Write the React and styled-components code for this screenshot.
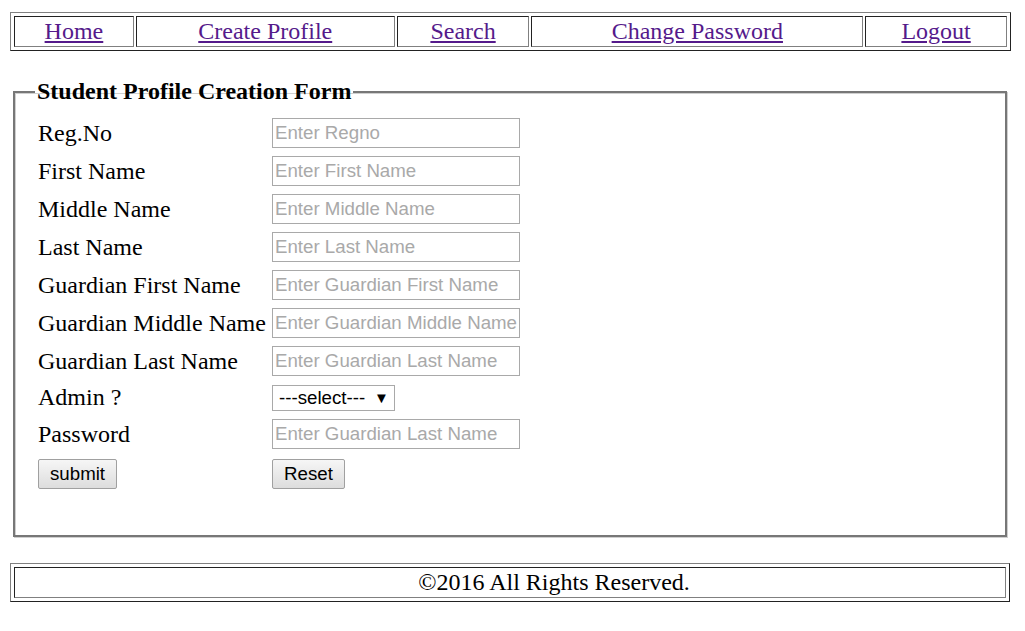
import React from 'react';
import styled, { createGlobalStyle } from 'styled-components';

const GlobalStyle = createGlobalStyle`
  body {
    margin: 0;
    background: #fff;
    color: #000;
    font-family: 'Liberation Serif', 'Times New Roman', serif;
  }
`;

const Page = styled.div`
  padding: 12px 0 0 10px;
  width: 1001px;
`;

const Bar = styled.div`
  display: grid;
  grid-template-columns: ${(p) => p.cols || '1fr'};
  gap: 2px;
  padding: 3px;
  border: 1px solid;
  border-color: #808080 #222 #222 #808080;
  box-sizing: border-box;
  width: ${(p) => p.width || '1001px'};
`;

const Cell = styled.div`
  height: 31px;
  box-sizing: border-box;
  border: 1px solid;
  border-color: #222 #808080 #808080 #222;
  display: flex;
  align-items: center;
  justify-content: center;
  font-size: 24px;
  padding-left: ${(p) => p.shift || 0}px;
`;

const NavLink = styled.a`
  color: #551a8b;
  text-decoration: underline;
  cursor: pointer;
`;

const Fieldset = styled.fieldset`
  margin: 27px 0 0 3px;
  width: 994px;
  box-sizing: border-box;
  border: 2px solid #777;
  box-shadow: inset 1px 1px 0 #cfcfcf, 1px 1px 0 #cfcfcf;
  padding: 13px 23px 44px;
`;

const Legend = styled.legend`
  font-size: 24px;
  font-weight: bold;
  padding: 0 2px;
  margin-left: -3px;
`;

const FormGrid = styled.div`
  display: grid;
  grid-template-columns: 234px auto;
  grid-template-rows: repeat(7, 30px) 27px 30px 34px;
  row-gap: 8px;
  align-items: center;
  justify-items: start;
`;

const Label = styled.label`
  font-size: 24px;
  white-space: nowrap;
`;

const TextInput = styled.input`
  width: 248px;
  height: 30px;
  box-sizing: border-box;
  border: 1px solid #a9a9a9;
  padding: 0 2px;
  font-family: Arial, 'Liberation Sans', sans-serif;
  font-size: 18.7px;
  color: #000;
  &::placeholder {
    color: #a9a9a9;
  }
  &:focus {
    outline: none;
  }
`;

const SelectBox = styled.span`
  display: inline-flex;
  align-items: center;
  height: 26px;
  width: 123px;
  box-sizing: border-box;
  border: 1px solid #a9a9a9;
  background: #fff;
  font-family: Arial, 'Liberation Sans', sans-serif;
  font-size: 18.7px;
`;

const Select = styled.select`
  appearance: none;
  border: none;
  background: transparent;
  font: inherit;
  color: #000;
  padding: 0 0 0 6px;
  width: 101px;
  &:focus {
    outline: none;
  }
`;

const Arrow = styled.span`
  font-size: 15px;
  pointer-events: none;
`;

const Button = styled.button`
  height: 30px;
  padding: 0 11px;
  box-sizing: border-box;
  border: 1px solid #a0a0a0;
  border-radius: 2px;
  background: linear-gradient(#f6f6f6, #dddddd);
  font-family: Arial, 'Liberation Sans', sans-serif;
  font-size: 18.7px;
  color: #000;
`;

const Footer = styled.div`
  margin-top: 26px;
`;

const navItems = [
  ['Home', '120fr'],
  ['Create Profile', '259fr'],
  ['Search', '133fr'],
  ['Change Password', '332fr'],
  ['Logout', '142fr'],
];

const fields = [
  ['Reg.No', 'Enter Regno'],
  ['First Name', 'Enter First Name'],
  ['Middle Name', 'Enter Middle Name'],
  ['Last Name', 'Enter Last Name'],
  ['Guardian First Name', 'Enter Guardian First Name'],
  ['Guardian Middle Name', 'Enter Guardian Middle Name'],
  ['Guardian Last Name', 'Enter Guardian Last Name'],
];

export default function App() {
  return (
    <Page>
      <GlobalStyle />
      <Bar cols={navItems.map((n) => n[1]).join(' ')}>
        {navItems.map(([name]) => (
          <Cell key={name}>
            <NavLink href="#">{name}</NavLink>
          </Cell>
        ))}
      </Bar>

      <Fieldset>
        <Legend>Student Profile Creation Form</Legend>
        <FormGrid>
          {fields.map(([label, ph]) => (
            <React.Fragment key={label}>
              <Label>{label}</Label>
              <TextInput type="text" placeholder={ph} />
            </React.Fragment>
          ))}
          <Label>Admin ?</Label>
          <SelectBox>
            <Select defaultValue="">
              <option value="">---select---</option>
              <option value="yes">Yes</option>
              <option value="no">No</option>
            </Select>
            <Arrow>▼</Arrow>
          </SelectBox>
          <Label>Password</Label>
          <TextInput type="password" placeholder="Enter Guardian Last Name" />
          <Button type="submit">submit</Button>
          <Button type="reset">Reset</Button>
        </FormGrid>
      </Fieldset>

      <Footer>
        <Bar width="1000px">
          <Cell shift={88}>©2016 All Rights Reserved.</Cell>
        </Bar>
      </Footer>
    </Page>
  );
}
